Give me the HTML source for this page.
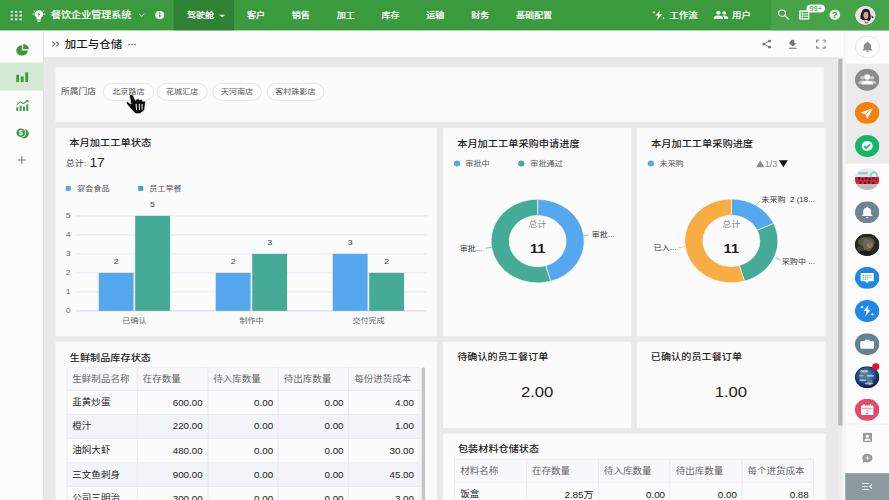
<!DOCTYPE html>
<html lang="zh-CN">
<head>
<meta charset="utf-8">
<title>餐饮企业管理系统</title>
<style>
*{box-sizing:border-box;margin:0;padding:0}
html,body{width:889px;height:500px;overflow:hidden;background:#e9e9e9}
body{font-family:"Liberation Sans","Noto Sans CJK SC",sans-serif;color:#222}
#app{position:absolute;left:0;top:0;width:1280px;height:800px;transform-origin:0 0;transform:scale(0.694531,0.625);background:#e9e9e9;overflow:hidden}
.abs{position:absolute}
/* header */
#hdr{left:0;top:0;width:1280px;height:48.700px;background:#3c9a3e;color:#fff}
#hdr .t{position:absolute;top:0.800px;height:48px;line-height:47px;font-size:13px;font-weight:500;white-space:nowrap;color:#f4faf4;-webkit-text-stroke:0.300px #f4faf4}
#hdr .active{position:absolute;left:249.500px;top:0;width:87.500px;height:48.700px;background:#2f8233}
#hdr .rsec{position:absolute;left:1110px;top:0;width:170px;height:48.700px;background:#47a34a}
/* left sidebar */
#ls{left:0;top:48.700px;width:62.5px;height:752px;background:#fcfcfc;border-right:1px solid #dadada}
#ls .act{position:absolute;left:0;top:51px;width:62px;height:45px;background:#d3e9d3}
/* title bar */
#tb{left:63px;top:48.700px;width:1152px;height:45.500px;background:#fcfcfc;border-bottom:2px solid #dbdbdb}
.card{position:absolute;background:#fbfbfb}
.ct{position:absolute;font-size:14.5px;font-weight:500;color:#1a1a1a;white-space:nowrap;letter-spacing:.1px}
.pill{position:absolute;top:24.500px;height:28px;border:1px solid #d9d9d9;border-radius:14px;background:#fdfdfd;font-size:11.700px;line-height:26px;text-align:center;color:#555}
/* right sidebar */
#rs{left:1216px;top:48.700px;width:64px;height:752px;background:#fcfcfc;border-left:1px solid #f3f3f3}
.circ{position:absolute;left:14.5px;width:34px;height:34px;border-radius:50%;overflow:hidden}
table{border-collapse:collapse;table-layout:fixed;position:absolute}
td,th{border:1px solid #e3e3ea;height:38.500px;font-size:13.700px;padding:0 8px 0 7.500px;white-space:nowrap;overflow:hidden}
th{font-weight:400;color:#666;text-align:left;background:#f8f8fa}
td{color:#222;text-align:right}
td:first-child{text-align:left;padding-bottom:3px}
th{padding-bottom:1.500px;height:37px}
td{font-size:14.100px;padding-right:6.800px}
td:first-child{font-size:13.700px}
tr.alt td{background:#f3f4f9}
</style>
</head>
<body>
<div id="app">
<!-- HEADER -->
<div id="hdr" class="abs">
  <div class="active"></div>
  <div class="rsec"></div>
  <!-- grid icon -->
  <svg class="abs" style="left:15px;top:16.5px" width="17" height="16" viewBox="0 0 17 16" fill="#d3ead3">
    <rect x="0" y="0" width="3.6" height="3.4"/><rect x="6.5" y="0" width="3.6" height="3.4"/><rect x="13" y="0" width="3.6" height="3.4"/>
    <rect x="0" y="6.2" width="3.6" height="3.4"/><rect x="6.5" y="6.2" width="3.6" height="3.4"/><rect x="13" y="6.2" width="3.6" height="3.4"/>
    <rect x="0" y="12.4" width="3.6" height="3.4"/><rect x="6.5" y="12.4" width="3.6" height="3.4"/><rect x="13" y="12.4" width="3.6" height="3.4"/>
  </svg>
  <!-- bulb icon -->
  <svg class="abs" style="left:45px;top:14px" width="22" height="22" viewBox="0 0 22 22">
    <path d="M11 2.5a6.2 6.2 0 0 0-3.4 11.4v2.3h6.8v-2.3A6.2 6.2 0 0 0 11 2.5z" fill="#fff"/>
    <rect x="8" y="17.2" width="6" height="1.6" fill="#fff"/><rect x="9" y="19.6" width="4" height="1.4" fill="#fff"/>
    <path d="M11.8 5l-3 4.6h2.1l-.9 3.6 3.2-4.8h-2.2z" fill="#3c9a3e"/>
    <g stroke="#fff" stroke-width="1.3" stroke-linecap="round"><path d="M2.2 8.6h1.6M18.2 8.6h1.6M4 3.2l1.1 1.1M18 3.2l-1.1 1.1"/></g>
  </svg>
  <div class="t" style="left:73.5px;font-size:14.4px;font-weight:500;letter-spacing:0.05px">餐饮企业管理系统</div>
  <svg class="abs" style="left:198.5px;top:20.5px" width="10" height="7" viewBox="0 0 10 7"><path d="M1 1l4 4 4-4" fill="none" stroke="#d8ecd8" stroke-width="1.4"/></svg>
  <!-- info -->
  <svg class="abs" style="left:223px;top:16.5px" width="14" height="14" viewBox="0 0 14 14"><circle cx="7" cy="7" r="6.8" fill="#e4f2e4"/><rect x="6.1" y="6" width="1.8" height="4.6" fill="#3c9a3e"/><rect x="6.1" y="3.2" width="1.8" height="1.8" fill="#3c9a3e"/></svg>
  <div class="t" style="left:269.3px">驾驶舱</div>
  <svg class="abs" style="left:314.5px;top:22.5px" width="10" height="5" viewBox="0 0 10 5"><path d="M0 0h10l-5 5z" fill="#cfe6cf"/></svg>
  <div class="t" style="left:355.6px">客户</div>
  <div class="t" style="left:420.2px">销售</div>
  <div class="t" style="left:484.7px">加工</div>
  <div class="t" style="left:549.2px">库存</div>
  <div class="t" style="left:613.8px">运输</div>
  <div class="t" style="left:678.4px">财务</div>
  <div class="t" style="left:742.9px">基础配置</div>

  <!-- workflow -->
  <svg class="abs" style="left:939px;top:15.5px" width="20" height="17" viewBox="0 0 20 17" fill="#e6f3e6">
    <path d="M11.5 0.5L4.5 9.3h4.2L6.6 16.5l8-9.6h-4.6z"/>
    <path d="M2.6 1.2l.7 1.6 1.6.7-1.6.7-.7 1.6-.7-1.6L.3 3.5l1.6-.7z"/>
    <path d="M16.3 11.2l.6 1.3 1.3.6-1.3.6-.6 1.3-.6-1.3-1.3-.6 1.3-.6z"/>
  </svg>
  <div class="t" style="left:964px;font-size:13.5px;font-weight:500">工作流</div>
  <!-- users -->
  <svg class="abs" style="left:1027px;top:17px" width="22" height="14" viewBox="0 0 22 14" fill="#e6f3e6">
    <circle cx="7.3" cy="3.4" r="3.2"/><path d="M0.6 13.5v-2.2c0-2.3 4.4-3.5 6.7-3.5s6.7 1.2 6.7 3.5v2.2z"/>
    <circle cx="15.8" cy="3.6" r="2.8"/><path d="M15.4 13.5v-2.3c0-1.4-.8-2.4-1.9-3.2.8-.1 1.600-.2 2.2-.2 2 0 5.800 1.100 5.800 3.400v2.300z"/>
  </svg>
  <div class="t" style="left:1054px;font-size:13.5px;font-weight:500">用户</div>
  <!-- search -->
  <svg class="abs" style="left:1119px;top:14px" width="18" height="18" viewBox="0 0 18 18" fill="none" stroke="#eaf5ea" stroke-width="1.8"><circle cx="7" cy="7" r="5"/><path d="M10.8 10.800l5.700 5.700" stroke-linecap="round"/></svg>
  <!-- list -->
  <svg class="abs" style="left:1150px;top:15.5px" width="16" height="16" viewBox="0 0 16 16"><rect x="0.500" y="0.5" width="15" height="15" rx="1.5" fill="#dff0df"/><g fill="#47a34a"><rect x="2.600" y="3.200" width="2" height="2"/><rect x="5.800" y="3.200" width="7.600" height="2"/><rect x="2.600" y="7" width="2" height="2"/><rect x="5.800" y="7" width="7.600" height="2"/><rect x="2.600" y="10.800" width="2" height="2"/><rect x="5.800" y="10.800" width="7.600" height="2"/></g></svg>
  <div class="abs" style="left:1161px;top:6.5px;width:27px;height:13.500px;border-radius:7px;background:#f4faf4;color:#3c9a3e;font-size:10.5px;line-height:13.500px;text-align:center;font-weight:400">99+</div>
  <!-- help -->
  <svg class="abs" style="left:1193.500px;top:15px" width="16" height="17" viewBox="0 0 16 17"><ellipse cx="8" cy="8.500" rx="7.900" ry="8.300" fill="#e4f2e4"/><text x="8" y="13.500" font-size="14" font-weight="700" text-anchor="middle" fill="#47a34a" font-family="Liberation Sans, sans-serif">?</text></svg>
  <!-- avatar -->
  <svg class="abs" style="left:1231px;top:9px" width="30" height="31" viewBox="0 0 30 31">
    <defs><clipPath id="avc"><ellipse cx="15" cy="15.500" rx="14" ry="14.500"/></clipPath></defs>
    <ellipse cx="15" cy="15.500" rx="14.600" ry="15.100" fill="#e9e4e2"/>
    <g clip-path="url(#avc)">
      <rect width="30" height="31" fill="#e9e5e3"/>
      <path d="M10 9c1.500-5 9-5.500 11-.5 1.500 4 2 9 1.500 13l-2 3.500-4-2-5 .5-3.500-3c-.5-4 .5-8 2-11.500z" fill="#1d1416"/>
      <path d="M13 11c2-2 5-1.500 6 1l.5 5c0 2-1.500 4-3 4.500l-2.500-.5c-1.500-1.500-2-4-2-6z" fill="#d99aa0"/>
      <path d="M23.500 15.500l3.500 3-2.500 1.500z" fill="#1d1416"/>
      <path d="M7 31c1-5 5-7 9-7l5 1c3 1 4 3 4.500 6z" fill="#f1ecec"/>
      <path d="M13 23l3 3 4-1-1 3-4 1z" fill="#c96a72"/>
    </g>
  </svg>
</div>
<!-- TITLE BAR -->
<div id="tb" class="abs">
  <svg class="abs" style="left:10.500px;top:17.600px" width="12" height="9" viewBox="0 0 12 9" fill="none" stroke="#666" stroke-width="1.500"><path d="M1 0.600l4.200 3.900L1 8.400M6.500 0.600l4.200 3.900-4.200 3.900"/></svg>
  <div class="abs" style="left:30.300px;top:0.700px;height:44px;line-height:43px;font-size:16.500px;font-weight:500;color:#1c1c1c;white-space:nowrap">加工与仓储</div>
  <div class="abs" style="left:121px;top:0.500px;height:44px;line-height:46px;font-size:13px;font-weight:700;color:#555;letter-spacing:0">···</div>
  <!-- share -->
  <svg class="abs" style="left:1034px;top:14.500px" width="14" height="15" viewBox="0 0 14 15" fill="#767676"><circle cx="11" cy="2.600" r="2.200"/><circle cx="2.800" cy="7.500" r="2.200"/><circle cx="11" cy="12.400" r="2.200"/><path d="M2.800 7.500L11 2.600M2.800 7.500L11 12.400" stroke="#767676" stroke-width="1.300" fill="none"/></svg>
  <!-- download -->
  <svg class="abs" style="left:1072px;top:14px" width="13" height="16" viewBox="0 0 13 16" fill="#767676"><path d="M4.300 0.500h4.400v5.500h3.300L6.500 11.500 1 6z"/><rect x="1" y="13.300" width="11" height="1.800"/></svg>
  <!-- fullscreen -->
  <svg class="abs" style="left:1111.500px;top:14.500px" width="14" height="15" viewBox="0 0 14 15" fill="none" stroke="#767676" stroke-width="1.700"><path d="M0.900 5V1h4M9.100 1h4v4M13.100 10v4h-4M4.900 14h-4v-4"/></svg>
</div>
<!-- LEFT SIDEBAR -->
<div id="ls" class="abs"><div class="act"></div>
  <!-- pie -->
  <svg class="abs" style="left:22.500px;top:20px" width="19" height="20" viewBox="0 0 19 20" fill="#3c9a3e"><path d="M8.600 3.200A8.300 8.600 0 1 0 17 11.700H8.600z"/><path d="M10.400 1.200v8.600h8.300A8.300 8.600 0 0 0 10.400 1.200z"/></svg>
  <!-- bars -->
  <svg class="abs" style="left:23px;top:66px" width="18" height="17" viewBox="0 0 18 17" fill="#3c9a3e"><rect x="0.500" y="4.500" width="4" height="12"/><rect x="7" y="7.500" width="4" height="9"/><rect x="13.500" y="0.500" width="4" height="16"/></svg>
  <!-- trend -->
  <svg class="abs" style="left:22.500px;top:110px" width="19" height="19" viewBox="0 0 19 19" fill="#3c9a3e"><rect x="0.500" y="12.500" width="2.800" height="6"/><rect x="5.300" y="10" width="2.800" height="8.500"/><rect x="10.100" y="11.500" width="2.800" height="7"/><rect x="14.900" y="8" width="2.800" height="10.500"/><path d="M1 8.500l5.500-4.500 4 2.800 6-5" fill="none" stroke="#3c9a3e" stroke-width="1.700"/><path d="M13.500 1h4.500v4.500z"/></svg>
  <!-- coins -->
  <svg class="abs" style="left:22px;top:154.500px" width="20" height="20" viewBox="0 0 20 20"><ellipse cx="12.300" cy="11" rx="7.200" ry="7.600" fill="#3c9a3e"/><ellipse cx="8" cy="9.300" rx="7.600" ry="8" fill="#fcfcfc"/><ellipse cx="8" cy="9.300" rx="6.300" ry="6.700" fill="#3c9a3e"/><text x="8" y="13.300" font-size="10.500" font-weight="700" fill="#fcfcfc" text-anchor="middle" font-family="Liberation Sans, sans-serif">$</text></svg>
  <!-- plus -->
  <svg class="abs" style="left:25px;top:200px" width="13" height="14" viewBox="0 0 13 14" stroke="#808080" stroke-width="1.500"><path d="M6.500 0.500v13M0 7h13"/></svg>
</div>
<!-- RIGHT SIDEBAR -->
<div id="rs" class="abs">
<div class="abs" style="left:0;top:53.400px;width:64px;height:159.500px;background:#ebebeb"></div>
<svg class="abs" style="left:13.700px;top:8.300px" width="36" height="36" viewBox="0 0 36 36"><circle cx="18" cy="18" r="17.300" fill="#fdfdfd" stroke="#dcdcdc" stroke-width="1"/><path d="M18 9.500c-.8 0-1.300.6-1.300 1.300v.5c-2.600.6-4 2.800-4 5.500v4.200l-1.700 1.800v.9h14v-.9l-1.700-1.800v-4.200c0-2.700-1.400-4.900-4-5.500v-.5c0-.7-.5-1.300-1.300-1.300zM16.300 24.700a1.700 1.700 0 0 0 3.400 0z" fill="#8d8d8d"/></svg>
<svg class="abs" style="left:13.900px;top:61.7px" width="35.200" height="35.200" viewBox="0 0 34.600 34.600"><circle cx="17.300" cy="17.300" r="17.300" fill="#8b8b8b"/><g fill="#c9c9c9"><circle cx="10.300" cy="14" r="3"/><path d="M4.500 23.500c0-3.500 3-5 5.800-5s3 1 3 1v4z"/><circle cx="24.300" cy="14" r="3"/><path d="M30.100 23.500c0-3.500-3-5-5.800-5s-3 1-3 1v4z"/></g><g fill="#fff"><circle cx="17.300" cy="13" r="4.200"/><path d="M8.800 24.800c0-4.500 4.500-6.300 8.500-6.300s8.500 1.800 8.500 6.300z"/></g></svg>
<svg class="abs" style="left:13.900px;top:114.5px" width="35.200" height="35.200" viewBox="0 0 34.600 34.600"><circle cx="17.300" cy="17.300" r="17.300" fill="#f5820c"/><path d="M25.800 9.500L7.800 17.200l7.200 2.200 2.400 7.400z" fill="#fff"/><path d="M25.800 9.500L15 19.400" stroke="#f5820c" stroke-width="1.200"/></svg>
<svg class="abs" style="left:13.900px;top:167.3px" width="35.200" height="35.200" viewBox="0 0 34.600 34.600"><circle cx="17.300" cy="17.300" r="17.300" fill="#14b46b"/><circle cx="17.300" cy="17.300" r="7.800" fill="#fff"/><path d="M13 17.500l3 3 5.500-6" fill="none" stroke="#14b46b" stroke-width="2.400"/></svg>
<svg class="abs" style="left:13.900px;top:220.1px" width="35.200" height="35.200" viewBox="0 0 34.600 34.600"><circle cx="17.300" cy="17.300" r="17.300" fill="#dfe6ea"/><defs><clipPath id="c3"><circle cx="17.300" cy="17.300" r="17.300"/></clipPath></defs><g clip-path="url(#c3)"><rect width="35" height="35" fill="#eef0ef"/><rect y="3" width="35" height="11" fill="#dfeceb"/><rect x="5" y="6" width="13" height="4" fill="#9cc7c3"/><path d="M21 14c0-6 3-9 6-9s5 3 6 9z" fill="#8ecfca"/><path d="M23.500 14c0-4 1.500-6 3.500-6s3.500 2 3.500 6z" fill="#f4eeee"/><rect y="14" width="35" height="11.500" fill="#c9283a"/><g fill="#3a1518"><circle cx="6" cy="16" r="1.600"/><circle cx="11" cy="17.500" r="1.500"/><circle cx="16" cy="16" r="1.600"/><circle cx="21" cy="17.500" r="1.500"/><circle cx="26" cy="16" r="1.600"/><circle cx="30" cy="18" r="1.400"/><circle cx="8" cy="22.500" r="1.500"/><circle cx="14" cy="23.500" r="1.500"/><circle cx="20" cy="22.500" r="1.500"/><circle cx="26" cy="23.500" r="1.500"/></g><rect y="25.500" width="35" height="10" fill="#bdbdc0"/></g></svg>
<svg class="abs" style="left:13.900px;top:272.9px" width="35.200" height="35.200" viewBox="0 0 34.600 34.600"><circle cx="17.300" cy="17.300" r="17.300" fill="#6c8591"/><path d="M17.300 8.500c-.8 0-1.300.6-1.300 1.300v.6c-2.800.6-4.300 3-4.300 5.800v4.400l-1.800 1.900v.9h14.800v-.9l-1.800-1.900v-4.400c0-2.800-1.500-5.200-4.300-5.800v-.6c0-.7-.5-1.300-1.300-1.300zM15.500 24.600a1.800 1.800 0 0 0 3.600 0z" fill="#fff"/></svg>
<svg class="abs" style="left:13.900px;top:325.7px" width="35.200" height="35.200" viewBox="0 0 34.600 34.600"><circle cx="17.300" cy="17.300" r="17.300" fill="#3b3b38"/><defs><clipPath id="c5"><circle cx="17.300" cy="17.300" r="17.300"/></clipPath></defs><g clip-path="url(#c5)"><rect width="35" height="35" fill="#262622"/><ellipse cx="16" cy="13" rx="12" ry="8" fill="#54574a"/><ellipse cx="12" cy="24" rx="9" ry="6" fill="#3c3f36"/><path d="M14 8l10 3 3 8-6 8-8-2-3-9z" fill="#6d6f62" opacity=".8"/><ellipse cx="20.500" cy="18.500" rx="3.500" ry="4" fill="#a2785f"/><path d="M19 16l4 1-1 2z" fill="#c2453c"/><path d="M4 30c3-3 9-4 14-3l6 3v6H4z" fill="#1b1b19"/></g></svg>
<svg class="abs" style="left:13.900px;top:378.5px" width="35.200" height="35.200" viewBox="0 0 34.600 34.600"><circle cx="17.300" cy="17.300" r="17.300" fill="#1e88e5"/><path d="M9 9.500h16.600a1 1 0 0 1 1 1v11a1 1 0 0 1-1 1H20l-2.700 3.200-2.700-3.200H9a1 1 0 0 1-1-1v-11a1 1 0 0 1 1-1z" fill="#fff"/><g stroke="#1e88e5" stroke-width="1.300" stroke-dasharray="1.500 1.200"><path d="M11 13.500h12.600M11 16.500h12.600M11 19.500h8"/></g></svg>
<svg class="abs" style="left:13.900px;top:431.3px" width="35.200" height="35.200" viewBox="0 0 34.600 34.600"><circle cx="17.300" cy="17.300" r="17.300" fill="#1e88e5"/><g fill="#fff"><path d="M19.500 7.500l-7.500 10h4.500l-2.300 9 8.300-11h-4.800z"/><path d="M10 8.500l.8 1.900 1.900.8-1.900.8-.8 1.900-.8-1.900-1.900-.8 1.900-.8z"/><path d="M24.500 20l.8 1.800 1.800.8-1.800.8-.8 1.800-.8-1.800-1.800-.8 1.800-.8z"/></g></svg>
<svg class="abs" style="left:13.900px;top:484.1px" width="35.200" height="35.200" viewBox="0 0 34.600 34.600"><circle cx="17.300" cy="17.300" r="17.300" fill="#64818d"/><path d="M14 10.500h6.600v2.300H26a1 1 0 0 1 1 1v9.700a1 1 0 0 1-1 1H8.600a1 1 0 0 1-1-1v-9.700a1 1 0 0 1 1-1H14zM15.600 12v.8h3.400V12z" fill="#fff" fill-rule="evenodd"/></svg>
<svg class="abs" style="left:13.900px;top:536.9px" width="35.200" height="35.200" viewBox="0 0 34.600 34.600"><circle cx="17.300" cy="17.300" r="17.300" fill="#16294f"/><defs><clipPath id="c9"><circle cx="17.300" cy="17.300" r="17.300"/></clipPath><radialGradient id="g9" cx=".45" cy=".4" r=".6"><stop offset="0" stop-color="#5f8fc9"/><stop offset=".6" stop-color="#2a5298"/><stop offset="1" stop-color="#101d3c"/></radialGradient></defs><circle cx="17.300" cy="17.300" r="16" fill="url(#g9)"/><g clip-path="url(#c9)" fill="#5d7f78"><path d="M8 9c4-3 9-2 11 1l-2 5-5 3-3 5-3-6z"/><path d="M17 19l6 1 2 5-4 6-4-5z"/></g><g fill="#dfe8f3" opacity=".65"><ellipse cx="13" cy="8" rx="6" ry="2"/><ellipse cx="22" cy="15" rx="5" ry="1.500"/><ellipse cx="11" cy="22" rx="5" ry="1.600"/><ellipse cx="20" cy="27" rx="6" ry="1.600"/><ellipse cx="9" cy="15" rx="3" ry="1.200"/></g></svg>
<div class="abs" style="left:39.200px;top:532.800px;width:9.600px;height:10.600px;border-radius:50%;background:#f30b1a"></div>
<svg class="abs" style="left:13.900px;top:589.7px" width="35.200" height="35.200" viewBox="0 0 34.600 34.600"><circle cx="17.300" cy="17.300" r="17.300" fill="#e4486a"/><path d="M9.500 10.500h15.600a1 1 0 0 1 1 1v13a1 1 0 0 1-1 1H9.500a1 1 0 0 1-1-1v-13a1 1 0 0 1 1-1z" fill="#fff"/><rect x="9.800" y="14.300" width="15" height="1.100" fill="#e4486a"/><rect x="11.800" y="8.300" width="1.800" height="3.600" fill="#fff"/><rect x="21" y="8.300" width="1.800" height="3.600" fill="#fff"/><text x="17.300" y="23.800" font-size="8.500" text-anchor="middle" fill="#e4486a" font-family="Liberation Sans, sans-serif">2</text></svg>
<div class="abs" style="left:0;top:629.500px;width:64px;height:1px;background:#e3e3e3"></div>
<svg class="abs" style="left:24.500px;top:643px" width="14" height="16" viewBox="0 0 14 16"><rect x="0.500" y="0.500" width="13" height="15" rx="1.500" fill="#9a9a9a"/><circle cx="7" cy="6" r="2.400" fill="#fcfcfc"/><path d="M2.600 13c0-2.600 2.400-3.400 4.400-3.400s4.400.8 4.400 3.400z" fill="#fcfcfc"/></svg>
<svg class="abs" style="left:23.500px;top:676.500px" width="16" height="17" viewBox="0 0 16 17"><path d="M8 0.800a7.200 7 0 1 1-3.600 13.100L0.800 16l1.300-3.800A7.200 7 0 0 1 8 0.800z" fill="#9a9a9a"/><path d="M8 5v5.600M5.200 7.800h5.600" stroke="#fcfcfc" stroke-width="1.400"/></svg>
<div class="abs" style="left:-1.500px;top:708.500px;width:66px;height:44px;background:#8d9a9d"></div><svg class="abs" style="left:23.500px;top:723.500px" width="15.500" height="13" viewBox="0 0 18 15" fill="none" stroke="#f2f4f4" stroke-width="1.800"><path d="M0.500 2h11M0.500 7.500h9M0.500 13h11M17 3.500l-4 4 4 4"/></svg>
</div>
<!-- CONTENT -->
<div id="content">
<div class="card" style="left:79.600px;top:108px;width:1106.800px;height:87px">
  <div class="abs" style="left:8.400px;top:25.700px;height:27px;line-height:26px;font-size:12.600px;color:#444;white-space:nowrap">所属门店</div>
  <div class="pill" style="left:68px;width:74.500px">北京路店</div>
  <div class="pill" style="left:146.500px;width:72.500px">花城汇店</div>
  <div class="pill" style="left:226px;width:71px">天河南店</div>
  <div class="pill" style="left:304.500px;width:82.500px">客村珠影店</div>
  <!-- cursor hand -->
  <svg class="abs" style="left:100px;top:40.800px" width="32" height="36" viewBox="0 0 32 36">
    <path d="M9 2.200C7.500 2.200 6.200 3.500 6.500 5.200L8.600 17.500L4.500 14.200C3 13.200 1 15 2.200 16.800L11 28.500C13 31.500 16 33.200 18.500 33C21 32.800 23 32 24.800 30.400C27 28.500 28 27 28.400 25.500L29.400 15C29.600 12.600 26.600 12 25.800 13.400C25.600 10 22 9.600 21 11C20.600 8.600 17 8.600 16.200 10.200L15 11.400L12.400 5C11.800 3.200 10.500 2.200 9 2.200Z" fill="#0c0c0c" stroke="#f4f4f4" stroke-width="1.200" stroke-linejoin="round"/>
    <g stroke="#f4f4f4" stroke-width="1.500" stroke-linecap="round"><path d="M16 17.600l.5 8.600M20.500 17.600l.3 8.600M24.700 17.600l-.2 8.200"/></g>
  </svg>
</div>
<div class="card" style="left:79.600px;top:204.800px;width:549.700px;height:332.800px"><svg class="abs" style="left:0.400px;top:0" width="548.5" height="331.2" viewBox="0 0 548.5 331.2" font-family="Liberation Sans, Noto Sans CJK SC, sans-serif"><text x="19.600" y="28.300" font-size="14.800" font-weight="500" fill="#1a1a1a">本月加工工单状态</text><text x="14.500" y="61.300" font-size="13" fill="#444">总计:</text><text x="48.700" y="63" font-size="20" fill="#2a2a2a">17</text><rect x="14.600" y="92.600" width="7.400" height="7.800" fill="#56a8ee"/><text x="31.300" y="100.800" font-size="11.600" fill="#555">宴会食品</text><rect x="118.900" y="92.600" width="7.400" height="7.800" fill="#45ab97"/><text x="135" y="100.800" font-size="11.600" fill="#555">员工早餐</text><g transform="translate(0,0.8)"><path d="M29.400 291.6H534.800" stroke="#c9cbe0" stroke-width="1.2"/><text x="21.500" y="295.8" font-size="12.600" fill="#666" text-anchor="end">0</text><path d="M29.400 261.2H534.800" stroke="#d8daeb" stroke-width="1"/><text x="21.500" y="265.4" font-size="12.600" fill="#666" text-anchor="end">1</text><path d="M29.400 230.8H534.800" stroke="#d8daeb" stroke-width="1"/><text x="21.500" y="235.0" font-size="12.600" fill="#666" text-anchor="end">2</text><path d="M29.400 200.4H534.800" stroke="#d8daeb" stroke-width="1"/><text x="21.500" y="204.6" font-size="12.600" fill="#666" text-anchor="end">3</text><path d="M29.400 170.0H534.800" stroke="#d8daeb" stroke-width="1"/><text x="21.500" y="174.2" font-size="12.600" fill="#666" text-anchor="end">4</text><path d="M29.400 139.6H534.800" stroke="#d8daeb" stroke-width="1"/><text x="21.500" y="143.8" font-size="12.600" fill="#666" text-anchor="end">5</text><rect x="62.1" y="230.8" width="50.200" height="60.8" fill="#56a8ee"/><rect x="114.6" y="139.6" width="50.200" height="152.0" fill="#45ab97"/><text x="87.2" y="216.8" font-size="12.800" fill="#444" text-anchor="middle">2</text><text x="139.7" y="125.6" font-size="12.800" fill="#444" text-anchor="middle">5</text><text x="113.6" y="310.4" font-size="11.600" fill="#666" text-anchor="middle">已确认</text><rect x="230.6" y="230.8" width="50.200" height="60.8" fill="#56a8ee"/><rect x="283.1" y="200.4" width="50.200" height="91.2" fill="#45ab97"/><text x="255.7" y="216.8" font-size="12.800" fill="#444" text-anchor="middle">2</text><text x="308.2" y="186.4" font-size="12.800" fill="#444" text-anchor="middle">3</text><text x="282.1" y="310.4" font-size="11.600" fill="#666" text-anchor="middle">制作中</text><rect x="399.1" y="200.4" width="50.200" height="91.2" fill="#56a8ee"/><rect x="451.6" y="230.8" width="50.200" height="60.8" fill="#45ab97"/><text x="424.2" y="186.4" font-size="12.800" fill="#444" text-anchor="middle">3</text><text x="476.7" y="216.8" font-size="12.800" fill="#444" text-anchor="middle">2</text><text x="450.6" y="310.4" font-size="11.600" fill="#666" text-anchor="middle">交付完成</text></g></svg></div>
<div class="card" style="left:637.500px;top:204.800px;width:271.100px;height:332.800px"><svg class="abs" style="left:0;top:0" width="269.7" height="331.2" viewBox="0 0 269.7 331.2" font-family="Liberation Sans, Noto Sans CJK SC, sans-serif"><text x="20.300" y="29.600" font-size="14.700" font-weight="500" fill="#1a1a1a">本月加工工单采购申请进度</text><ellipse cx="20.100" cy="56.800" rx="4.500" ry="4.800" fill="#56a8ee"/><text x="32" y="60.900" font-size="11.700" fill="#555">审批中</text><ellipse cx="112.600" cy="56.800" rx="4.500" ry="4.800" fill="#45ab97"/><text x="125.600" y="60.900" font-size="11.700" fill="#555">审批通过</text><path d="M136.10 113.80A67 67 0 0 1 154.98 245.09L147.65 220.14A41 41 0 0 0 136.10 139.80Z" fill="#56a8ee" stroke="#fbfbfb" stroke-width="1"/><path d="M154.98 245.09A67 67 0 1 1 136.10 113.80L136.10 139.80A41 41 0 1 0 147.65 220.14Z" fill="#45ab97" stroke="#fbfbfb" stroke-width="1"/><text x="136.1" y="158.800" font-size="13" fill="#888" text-anchor="middle">总计</text><text x="136.1" y="199.600" font-size="21" font-weight="700" fill="#1a1a1a" text-anchor="middle">11</text><path d="M203.200 172.300L209.800 170.700" stroke="#56a8ee" stroke-width="1"/><text x="213.900" y="173.800" font-size="11.600" fill="#333">审批...</text><path d="M61.200 192.300L69.900 190.700" stroke="#45ab97" stroke-width="1"/><text x="23.800" y="196.800" font-size="11.600" fill="#333">审批...</text></svg></div>
<div class="card" style="left:917.300px;top:204.800px;width:271.300px;height:332.800px"><svg class="abs" style="left:-1.100px;top:0" width="270.2" height="331.2" viewBox="0 0 270.2 331.2" font-family="Liberation Sans, Noto Sans CJK SC, sans-serif"><text x="21.400" y="29.600" font-size="14.700" font-weight="500" fill="#1a1a1a">本月加工工单采购进度</text><ellipse cx="21.100" cy="56.800" rx="4.500" ry="4.800" fill="#56a8ee"/><text x="33.400" y="60.900" font-size="11.700" fill="#555">未采购</text><path d="M172.800 62.500h11.700l-5.850-11z" fill="#8a8a8a"/><text x="185" y="61.800" font-size="13.200" fill="#888">1/3</text><path d="M205.400 51.500h13l-6.500 11z" fill="#111"/><path d="M137.00 113.50A67 67 0 0 1 197.95 152.67L174.29 163.47A41 41 0 0 0 137.00 139.50Z" fill="#56a8ee" stroke="#fbfbfb" stroke-width="1"/><path d="M197.95 152.67A67 67 0 0 1 155.88 244.79L148.55 219.84A41 41 0 0 0 174.29 163.47Z" fill="#45ab97" stroke="#fbfbfb" stroke-width="1"/><path d="M155.88 244.79A67 67 0 1 1 137.00 113.50L137.00 139.50A41 41 0 1 0 148.55 219.84Z" fill="#f7ad42" stroke="#fbfbfb" stroke-width="1"/><text x="137" y="158.500" font-size="13" fill="#888" text-anchor="middle">总计</text><text x="137" y="199.300" font-size="21" font-weight="700" fill="#1a1a1a" text-anchor="middle">11</text><path d="M171.600 124L178.100 116.800" stroke="#56a8ee" stroke-width="1"/><text x="180.200" y="118.600" font-size="11.600" fill="#333" xml:space="preserve">未采购  2 (18...</text><path d="M200.500 207L207.400 211.800" stroke="#45ab97" stroke-width="1"/><text x="209.700" y="218" font-size="11.600" fill="#333">采购中 ...</text><path d="M61.400 191.200L70.100 189.800" stroke="#f7ad42" stroke-width="1"/><text x="25.400" y="195.400" font-size="11.600" fill="#333">已入...</text></svg></div>
<div class="card" style="left:79.600px;top:547.200px;width:549.700px;height:260px"><div class="ct" style="left:20.900px;top:13.800px;line-height:22px">生鲜制品库存状态</div><table style="left:16.100px;top:40px;width:508.200px"><tr><th>生鲜制品名称</th><th>在存数量</th><th>待入库数量</th><th>待出库数量</th><th>每份进货成本</th></tr><tr><td>韭黄炒蛋</td><td>600.00</td><td>0.00</td><td>0.00</td><td>4.00</td></tr><tr class="alt"><td>橙汁</td><td>220.00</td><td>0.00</td><td>0.00</td><td>1.00</td></tr><tr><td>油焖大虾</td><td>480.00</td><td>0.00</td><td>0.00</td><td>30.00</td></tr><tr class="alt"><td>三文鱼刺身</td><td>900.00</td><td>0.00</td><td>0.00</td><td>45.00</td></tr><tr><td>公司三明治</td><td>300.00</td><td>0.00</td><td>0.00</td><td>3.00</td></tr><tr class="alt"><td>牛肉盖饭</td><td>150.00</td><td>0.00</td><td>0.00</td><td>12.00</td></tr></table><div class="abs" style="left:527.800px;top:40.500px;width:4.900px;height:230px;background:#c4c4c4;border-radius:2px"></div></div>
<div class="card" style="left:637.500px;top:547.200px;width:271.100px;height:137.600px"><div class="ct" style="left:20.700px;top:13.100px;line-height:22px">待确认的员工餐订单</div><div class="abs" style="left:0;top:63.800px;width:269.7px;text-align:center;font-size:24px;line-height:32px;color:#1a1a1a;padding-left:2px">2.00</div></div>
<div class="card" style="left:917.300px;top:547.200px;width:271.300px;height:137.600px"><div class="ct" style="left:19.800px;top:13.100px;line-height:22px">已确认的员工餐订单</div><div class="abs" style="left:-1.100px;top:63.800px;width:270.2px;text-align:center;font-size:24px;line-height:32px;color:#1a1a1a;padding-left:2px">1.00</div></div>
<div class="card" style="left:637.500px;top:694.200px;width:551.100px;height:120px"><div class="ct" style="left:21.900px;top:12.800px;line-height:22px">包装材料仓储状态</div><table style="left:16.700px;top:39.800px;width:518px"><tr><th>材料名称</th><th>在存数量</th><th>待入库数量</th><th>待出库数量</th><th>每个进货成本</th></tr><tr><td>饭盒</td><td>2.85万</td><td>0.00</td><td>0.00</td><td>0.88</td></tr><tr class="alt"><td>一次性筷子</td><td>3.20万</td><td>0.00</td><td>0.00</td><td>0.12</td></tr></table></div>
<div class="abs" style="left:1211.500px;top:93px;width:5px;height:707px;background:#f6f6f6"></div><div class="abs" style="left:1207.400px;top:93px;width:5.200px;height:707px;background:#ededed"></div><div class="abs" style="left:1207.400px;top:94.200px;width:5.200px;height:586.800px;background:#b6b6b6"></div>
</div>
</div>
</body>
</html>
